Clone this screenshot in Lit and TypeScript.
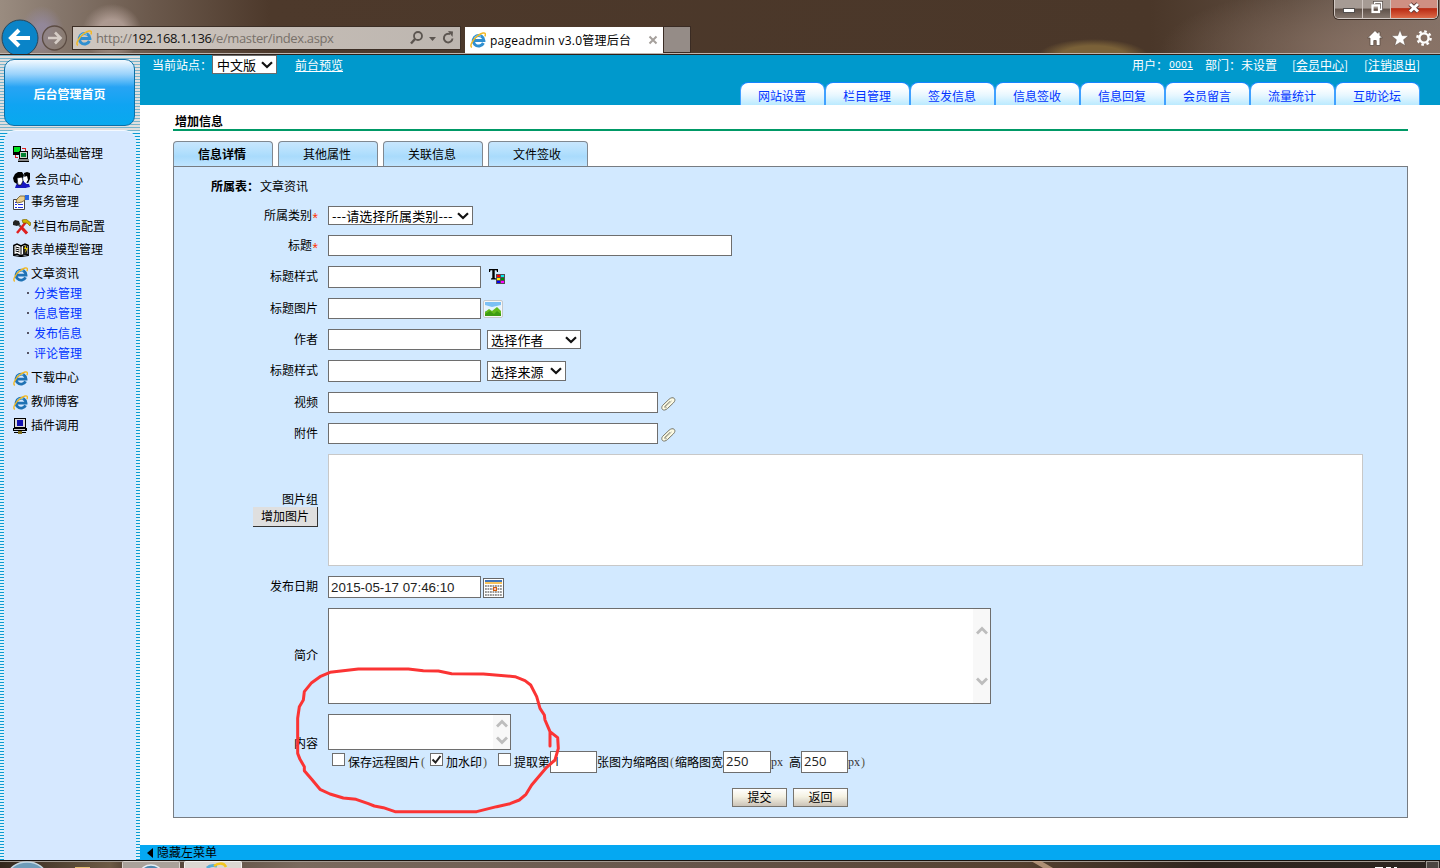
import { LitElement, html, css, svg } from 'lit';
import type { TemplateResult } from 'lit';
import { customElement } from 'lit/decorators.js';
import { classMap } from 'lit/directives/class-map.js';

interface MenuItem {
  label: string;
  icon?: TemplateResult;
  pitch: number;
  sub?: boolean;
  indent?: number;
}

const ieIcon = (size: number, color = '#2f8fd0') => html`
  <svg width=${size} height=${size} viewBox="0 0 16 16">
    <path d="M13.400 11A5.300 5.300 0 1 1 13.900 8.600H4.600" fill="none" stroke=${color} stroke-width="3" />
    <path d="M4.200 6.200A4.600 4.600 0 0 1 11 4.400" fill="none" stroke="#7cc8f0" stroke-width="1.2" />
    <path d="M2 15.200C-1 14.600 2.600 7.600 7.400 4 11.400 .9 15.400 -.2 15.400 2.400c0 .8-.2 1.400-.6 2" fill="none" stroke="#f2b824" stroke-width="1.500" />
  </svg>
`;

const chevron = html`
  <svg class="chevron" width="12" height="8" viewBox="0 0 12 8">
    <path d="M1 1.200 6 6 11 1.200" fill="none" stroke="#111" stroke-width="2.200" />
  </svg>
`;

const networkIcon = html`
  <svg width="16" height="16" viewBox="0 0 16 16" shape-rendering="crispEdges">
    <rect x="0" y="0" width="8" height="8" fill="#000" />
    <rect x="1" y="1" width="6" height="5" fill="#00e020" />
    <path d="M9 2.500h3.500V5M2.500 9v2.500H5" fill="none" stroke="#e02020" />
    <rect x="6" y="5" width="9" height="8" fill="#000" />
    <rect x="7" y="6" width="7" height="6" fill="#c8d0c8" />
    <rect x="8" y="7" width="5" height="4" fill="#008030" />
    <rect x="5" y="13" width="11" height="2" fill="#888" />
    <path d="M0 8.500h6M5 15.500h11" stroke="#000" />
  </svg>
`;

const membersIcon = html`
  <svg width="18" height="16" viewBox="0 0 18 16">
    <path d="M6 9h5l3 4-1 3H2l1-3z" fill="#1818c0" />
    <path d="M2 2l3-2h4l2 3-1 3-5 1-1 5-3-2-1-4z" fill="#000" />
    <path d="M4 6l5-1 1 4-2 4H5z" fill="#fff" stroke="#000" stroke-width=".7" />
    <path d="M11 1l3-1 3 1v6l-2 4-3-1z" fill="#000" />
    <path d="M11 5l3-1 1 4-2 3-2-1z" fill="#fff" />
    <path d="M11 12l5 0 1 3-5 1z" fill="#1818c0" />
  </svg>
`;

const tasksIcon = html`
  <svg width="16" height="15" viewBox="0 0 16 15">
    <path d="M.5 4.500h11v10H.5z" fill="#fff" stroke="#444" />
    <path d="M2 7.500h2M2 9.500h2M2 12.500h2M5 9.500h5M5 12.500h5" stroke="#2030e0" />
    <path d="M4 4l3-3h5v4l-3 2-5 1-1-2z" fill="#e8cf90" stroke="#685020" stroke-width=".8" />
    <path d="M12 0h4v5h-4z" fill="#2a6ae0" />
  </svg>
`;

const toolsIcon = html`
  <svg width="18" height="16" viewBox="0 0 18 16">
    <path d="M4 4l10 10" stroke="#555" stroke-width="2" />
    <path d="M9 9l5 5.500" stroke="#e02020" stroke-width="3" />
    <path d="M13 3L4 14" stroke="#e02020" stroke-width="2.400" />
    <path d="M0 3l2-2 4 1 1 3-3 2-4-1z" fill="#222" />
    <path d="M9 1l4-1 5 4-1 3-3-3-4 0z" fill="#d0b000" stroke="#6a5a00" stroke-width=".6" />
  </svg>
`;

const bookIcon = html`
  <svg width="16" height="14" viewBox="0 0 16 14">
    <path d="M.8 2.500L4 1l4 2 4-2 3.200 1.500V12L12 11l-4 2-4-2-3.200 1z" fill="#fff" stroke="#000" stroke-width="1.400" />
    <path d="M8 3v10M2.500 4l4 1M2.500 6l4 1M2.500 8l4 1M.5 12.500L7 13.500h2l6.500-1" fill="none" stroke="#000" />
    <path d="M10 3l4-1v9l-4 1z" fill="#222" />
    <path d="M13 2l-2 4h2l-1 4 3-5h-2z" fill="#f0d000" />
  </svg>
`;

const pluginIcon = html`
  <svg width="14" height="16" viewBox="0 0 14 16" shape-rendering="crispEdges">
    <rect x="1" y="0" width="12" height="10" fill="#000" />
    <rect x="2" y="1" width="10" height="8" fill="#d8d8d8" />
    <rect x="4" y="2" width="6" height="6" fill="#1010b0" />
    <rect x="0" y="10" width="14" height="3" fill="#000" />
    <rect x="1" y="11" width="11" height="1" fill="#ccc" />
    <path d="M1 14.500h12" stroke="#000" />
    <rect x="5" y="13" width="4" height="3" fill="#807020" />
  </svg>
`;

const clipIcon = html`
  <svg width="15" height="14" viewBox="0 0 15 14">
    <path d="M1.500 8.500L8 2.300c2-1.800 4-2 5.200-1 1.200 1.200.8 3-.8 4.600L6.500 11.500c-1.800 1.700-3.800 2-5 1-1-1-.9-2.700 0-4z" fill="#fdfbe4" stroke="#77776a" stroke-width="1" />
    <path d="M4 10l6.500-6M5.800 10.200c-1.600 1.200-2.800.4-2-1L9 4.200" fill="none" stroke="#99998a" stroke-width=".9" />
  </svg>
`;

@customElement('browser-chrome')
export class BrowserChrome extends LitElement {
  static override styles = css`
    :host {
      display: block;
      height: 55px;
      box-sizing: border-box;
      overflow: hidden;
      border-bottom: 1px solid #2e211a;
      font-family: 'Open Sans', 'Noto Sans CJK SC', sans-serif;
      background:
        radial-gradient(ellipse 55px 17px at 1093px 56px, #7a6138 0 60%, transparent),
        radial-gradient(ellipse 22px 26px at 42px 32px, rgba(150, 140, 170, 0.7) 0 30%, transparent),
        radial-gradient(ellipse 30px 28px at 112px 32px, rgba(190, 170, 162, 0.75) 0 45%, transparent),
        radial-gradient(ellipse 240px 70px at 1400px 50px, #8a7366 0%, transparent),
        linear-gradient(90deg, #9a8c80 0, #85766b 60px, #6b594c 150px, #4d392b 270px, #4a3729 1150px, #5e4c3f 1290px, #7e7169 1440px);
    }
    .bar {
      display: flex;
      height: 54px;
      box-sizing: border-box;
      border-bottom: 1px solid #bfb5ae;
    }
    .nav {
      display: flex;
      width: 72px;
      flex: none;
      padding: 18px 0 0 1px;
      box-sizing: border-box;
    }
    .address {
      display: flex;
      align-items: center;
      width: 389px;
      height: 24px;
      margin-top: 26px;
      padding: 0 5px 0 3px;
      box-sizing: border-box;
      border: 1px solid #3c2e25;
      background: linear-gradient(90deg, #cfc7c0, #c3bbb4 60%, #bdb6b0);
      flex: none;
    }
    .url {
      flex: 1;
      margin-left: 4px;
      padding-top: 1px;
      font-size: 13px;
      line-height: 21px;
      color: #777069;
      white-space: nowrap;
      letter-spacing: -0.36px;
    }
    .host {
      color: #111;
    }
    .tab {
      display: flex;
      align-items: center;
      width: 198px;
      height: 26px;
      margin: 27px 0 0 4px;
      padding: 0 5px;
      box-sizing: border-box;
      background: #fff;
      flex: none;
    }
    .tab-title {
      flex: 1;
      margin-left: 4px;
      padding-top: 2px;
      font-size: 12px;
      line-height: 24px;
      color: #000;
      white-space: nowrap;
      letter-spacing: 0.25px;
    }
    .new-tab {
      width: 28px;
      height: 27px;
      margin-top: 26px;
      box-sizing: border-box;
      border: 1px solid #3a2b23;
      background: #958c87;
    }
    .right {
      flex: 1;
      display: flex;
      flex-direction: column;
      align-items: flex-end;
    }
    .controls {
      display: flex;
      width: 104px;
      height: 19px;
      margin-right: 2px;
      box-sizing: border-box;
      border: 1px solid #d2c9c4;
      border-top: 0;
      border-radius: 0 0 5px 5px;
      overflow: hidden;
      box-shadow: 0 0 0 1px #3a2c24;
    }
    .control {
      display: flex;
      justify-content: center;
      width: 28px;
      background: linear-gradient(#a69b94 45%, #5f5149 50%, #85776e);
      border-right: 1px solid #cfc5c0;
      box-sizing: border-box;
    }
    .close {
      flex: 1;
      border-right: 0;
      background: linear-gradient(#cf8f82 0 42%, #b92a12 48%, #dc6a48);
    }
    .tools {
      display: flex;
      gap: 6.5px;
      margin: 10px 7px 0 0;
    }
  `;

  override render() {
    return html`
      <div class="bar">
        <div class="nav">
          <svg width="38" height="38" viewBox="0 0 38 38">
            <circle cx="19" cy="20" r="18" fill="#0a84c8" stroke="#2b4658" />
            <path d="M29 20H11M18 12l-8 8 8 8" fill="none" stroke="#fff" stroke-width="4" />
          </svg>
          <svg width="28" height="38" viewBox="0 0 28 38">
            <circle cx="15.500" cy="20" r="12" fill="#8d8078" fill-opacity=".6" stroke="#5c4c43" stroke-width="1.300" />
            <path d="M9 20h12M16 14.500l5.500 5.500-5.500 5.500" fill="none" stroke="#d5ccc6" stroke-width="2.600" />
          </svg>
        </div>
        <div class="address">
          ${ieIcon(16)}
          <div class="url">http://<span class="host">192.168.1.136</span>/e/master/index.aspx</div>
          <svg width="46" height="16" viewBox="0 0 46 16">
            <circle cx="9" cy="6" r="4" fill="none" stroke="#5c5550" stroke-width="1.800" />
            <path d="M6 9l-4 4.500" stroke="#5c5550" stroke-width="2.400" />
            <path d="M20 7h7l-3.500 4z" fill="#5c5550" />
            <path d="M43.500 8.500a4.300 4.300 0 1 1-2.500-4.300" fill="none" stroke="#5c5550" stroke-width="1.900" />
            <path d="M39 1l5 .5-.5 5.500z" fill="#5c5550" />
          </svg>
        </div>
        <div class="tab">
          ${ieIcon(16)}
          <div class="tab-title">pageadmin v3.0管理后台</div>
          <svg width="10" height="10" viewBox="0 0 10 10">
            <path d="M1.500 1.500l7 7M8.500 1.500l-7 7" stroke="#a5a09c" stroke-width="2" />
          </svg>
        </div>
        <div class="new-tab"></div>
        <div class="right">
          <div class="controls">
            <div class="control">
              <svg width="14" height="18"><rect x="1.500" y="8.500" width="11" height="4" fill="#fff" stroke="#53504f" /></svg>
            </div>
            <div class="control">
              <svg width="14" height="18">
                <path d="M4.500 4V2.500h7v7H10" fill="none" stroke="#5a504b" stroke-width="3" />
                <path d="M4.500 4V2.500h7v7H10" fill="none" stroke="#fff" stroke-width="1.400" />
                <rect x="2.500" y="5.500" width="6.500" height="6.500" fill="none" stroke="#fff" stroke-width="2.200" />
              </svg>
            </div>
            <div class="control close">
              <svg width="16" height="18">
                <path d="M4 4l8 7.500M12 4l-8 7.500" stroke="#5d3a36" stroke-width="4.600" />
                <path d="M4 4l8 7.500M12 4l-8 7.500" stroke="#fff" stroke-width="3" />
              </svg>
            </div>
          </div>
          <div class="tools">
            <svg width="18" height="18" viewBox="0 0 18 18">
              <path d="M9 1.500L1.500 9H4v7.500h3.800v-5h2.400v5H14V9h2.500L14 6.500V3h-2.200v1.300z" fill="#fff" stroke="#5a4b42" stroke-width=".8" />
            </svg>
            <svg width="18" height="18" viewBox="0 0 18 18">
              <path d="M9 .8l2.200 5.800 6.300.2-4.900 3.900 1.700 6.100L9 13.400l-5.300 3.400 1.700-6.100L.5 6.800l6.300-.2z" fill="#fff" stroke="#5a4b42" stroke-width=".5" />
            </svg>
            <svg width="18" height="18" viewBox="0 0 18 18">
              <circle cx="9" cy="9" r="6.600" fill="none" stroke="#fff" stroke-width="2.400" stroke-dasharray="2.600 2.580" />
              <circle cx="9" cy="9" r="4.600" fill="none" stroke="#fff" stroke-width="2.400" />
            </svg>
          </div>
        </div>
      </div>
    `;
  }
}

@customElement('side-menu')
export class SideMenu extends LitElement {
  static override styles = css`
    :host {
      display: flex;
      flex-direction: column;
      width: 140px;
      flex: none;
      box-sizing: border-box;
      padding: 4px 4px 0;
      gap: 4px;
      font: 12px/16px 'Noto Sans CJK SC', sans-serif;
      background:
        linear-gradient(90deg, rgba(225, 205, 195, 0.5), rgba(225, 205, 195, 0.5)) 0 0 / 100% 76px no-repeat,
        repeating-linear-gradient(#0b9bd4 0 1px, #e0f1fa 1px 3px);
    }
    .home {
      display: flex;
      align-items: center;
      justify-content: center;
      width: 131px;
      height: 67px;
      box-sizing: border-box;
      padding-top: 2px;
      border: 1px solid #0c6fa6;
      border-radius: 10px;
      background: linear-gradient(#f2f9ff 0, #9bd3fb 14px, #27a4f4 27px, #0fa4f2 45px, #08a9ee);
      color: #fff;
      font-weight: bold;
    }
    .menu {
      flex: 1;
      padding: 14px 0 0 9px;
      border-radius: 12px 12px 0 0;
      border-top: 1px solid #f4f9ff;
      background: #d6e8ff;
    }
    .item {
      display: flex;
      align-items: flex-start;
      color: #000;
    }
    .icon {
      display: flex;
      align-items: center;
      width: 18px;
      height: 18px;
    }
    .sub {
      color: #0033ff;
    }
    .sub .icon {
      justify-content: flex-end;
      width: 16px;
      height: 16px;
    }
    .dot {
      width: 2px;
      height: 2px;
      background: #556;
    }
  `;

  private _items: Array<MenuItem> = [
    { label: '网站基础管理', icon: networkIcon, pitch: 26 },
    { label: '会员中心', icon: membersIcon, pitch: 22, indent: 4 },
    { label: '事务管理', icon: tasksIcon, pitch: 25 },
    { label: '栏目布局配置', icon: toolsIcon, pitch: 23, indent: 2 },
    { label: '表单模型管理', icon: bookIcon, pitch: 24 },
    { label: '文章资讯', icon: ieIcon(15, '#1f72b4'), pitch: 20 },
    { label: '分类管理', pitch: 20, sub: true, indent: 5 },
    { label: '信息管理', pitch: 20, sub: true, indent: 5 },
    { label: '发布信息', pitch: 20, sub: true, indent: 5 },
    { label: '评论管理', pitch: 24, sub: true, indent: 5 },
    { label: '下载中心', icon: ieIcon(15, '#1f72b4'), pitch: 24 },
    { label: '教师博客', icon: ieIcon(15, '#1f72b4'), pitch: 24 },
    { label: '插件调用', icon: pluginIcon, pitch: 24 },
  ];

  override render() {
    return html`
      <div class="home">后台管理首页</div>
      <div class="menu">
        ${this._items.map(
          (item) => html`
            <div class=${classMap({ item: true, sub: !!item.sub })} style="height: ${item.pitch}px">
              <span class="icon">${item.icon ?? html`<span class="dot"></span>`}</span>
              <span style="margin-left: ${item.indent ?? 0}px">${item.label}</span>
            </div>
          `
        )}
      </div>
    `;
  }
}

@customElement('site-header')
export class SiteHeader extends LitElement {
  static override styles = css`
    :host {
      display: flex;
      justify-content: space-between;
      height: 50px;
      background: #0099cc;
      color: #fff;
      font: 12px/19px 'Noto Sans CJK SC', sans-serif;
    }
    .site {
      display: flex;
      padding-left: 12px;
    }
    .select {
      display: flex;
      align-items: center;
      justify-content: space-between;
      width: 65px;
      height: 19px;
      box-sizing: border-box;
      padding: 0 3px 0 4px;
      border: 1px solid #6b6b6b;
      background: #fff;
      color: #000;
      font-size: 13px;
      line-height: 16px;
    }
    .preview {
      margin-left: 18px;
      text-decoration: underline;
    }
    .account {
      display: flex;
      flex-direction: column;
      align-items: flex-end;
      justify-content: space-between;
      padding-right: 20px;
    }
    .user {
      display: flex;
      margin-right: -2px;
      white-space: nowrap;
    }
    .link {
      text-decoration: underline;
    }
    .code {
      width: 24px;
      margin-left: 1px;
      font-family: 'DejaVu Sans', sans-serif;
      font-size: 9.5px;
      line-height: 20px;
      text-decoration: underline;
    }
    .bracket {
      width: 6px;
    }
    .right-side {
      text-align: right;
    }
    .gap {
      margin-left: 12px;
    }
    .wide {
      margin-left: 13px;
    }
    .tabs {
      display: flex;
    }
    .tab {
      width: 85px;
      height: 23px;
      box-sizing: border-box;
      padding-right: 1px;
      border: 1px solid #3fa0ff;
      border-top-color: #1585ff;
      border-bottom: 0;
      border-radius: 8px 8px 0 0;
      background: linear-gradient(#fff 20%, #e8f7ff 55%, #baeaff);
      color: #0033ff;
      line-height: 26px;
      text-align: center;
    }
  `;

  private _tabs = ['网站设置', '栏目管理', '签发信息', '信息签收', '信息回复', '会员留言', '流量统计', '互助论坛'];

  override render() {
    return html`
      <div class="site">
        <span>当前站点：</span>
        <span class="select">中文版 ${chevron}</span>
        <span class="preview">前台预览</span>
      </div>
      <div class="account">
        <div class="user">
          <span>用户：</span><span class="code">0001</span>
          <span class="gap">部门：未设置</span>
          <span class="bracket wide right-side">[</span><span class="link">会员中心</span><span class="bracket">]</span>
          <span class="bracket gap right-side">[</span><span class="link">注销退出</span><span class="bracket">]</span>
        </div>
        <div class="tabs">${this._tabs.map((tab) => html`<div class="tab">${tab}</div>`)}</div>
      </div>
    `;
  }
}

@customElement('info-form')
export class InfoForm extends LitElement {
  static override styles = css`
    :host {
      display: block;
      flex: 1;
      padding: 8px 32px 0 33px;
      background: #fff;
      color: #000;
      font: 12px/16px 'Noto Sans CJK SC', sans-serif;
    }
    .title {
      height: 16px;
      padding-left: 2px;
      border-bottom: 2px solid #009966;
      font-weight: bold;
    }
    .tabs {
      display: flex;
      gap: 5px;
      margin-top: 10px;
    }
    .tab {
      width: 100px;
      height: 25px;
      box-sizing: border-box;
      padding-right: 2px;
      border: 1px solid #808890;
      border-bottom: 0;
      border-radius: 4px 4px 0 0;
      background: linear-gradient(#c8e6fd, #b4e0fd 40%, #a9dbfc 60%, #bfe4ff);
      line-height: 24px;
      text-align: center;
    }
    .active {
      font-weight: bold;
    }
    .panel {
      height: 652px;
      box-sizing: border-box;
      padding: 11px 0 0;
      border: 1px solid #777c82;
      background: #d2e9ff;
    }
    .table {
      display: flex;
      gap: 1px;
      padding-left: 37px;
      height: 28px;
    }
    .strong {
      font-weight: bold;
    }
    .rows {
      display: flex;
      flex-direction: column;
      gap: 10px;
    }
    .row {
      display: flex;
      align-items: center;
    }
    .label {
      width: 144px;
      margin-right: 10px;
      padding-bottom: 2px;
      flex: none;
      text-align: right;
    }
    .star {
      display: inline-block;
      width: 6px;
      color: #ff3300;
      font: 14px/10px 'Liberation Sans', sans-serif;
      vertical-align: -3px;
    }
    .field {
      box-sizing: border-box;
      height: 21px;
      margin: 0;
      padding: 0 2px;
      border: 1px solid #6e6e6e;
      border-radius: 0;
      outline: 0;
      background: #fff;
      color: #222;
      font: 13.3px/19px 'Liberation Sans', sans-serif;
    }
    .tall {
      height: 22px;
    }
    .w404 {
      width: 404px;
    }
    .w153 {
      width: 153px;
    }
    .w330 {
      width: 330px;
    }
    .num {
      width: 47px;
      height: 22px;
      padding-bottom: 2px;
      font-family: 'Open Sans', sans-serif;
      font-size: 13px;
      flex: none;
    }
    .num.wider {
      width: 48px;
    }
    .select {
      display: flex;
      align-items: center;
      justify-content: space-between;
      box-sizing: border-box;
      height: 19px;
      padding: 0 3px 0 3px;
      border: 1px solid #6e6e6e;
      background: #fff;
      font-size: 13px;
      line-height: 15px;
      letter-spacing: 0.2px;
      white-space: nowrap;
    }
    .category {
      width: 145px;
    }
    .author {
      width: 94px;
      margin-left: 6px;
    }
    .source {
      width: 79px;
      height: 20px;
      margin-left: 6px;
    }
    .after {
      margin-left: 2px;
      display: flex;
    }
    .calendar {
      margin: 1px 0 -1px 2px;
      display: flex;
    }
    .after-wide {
      margin-left: 7px;
      display: flex;
    }
    .clip {
      margin: 3px 0 0 3px;
      display: flex;
    }
    .group {
      display: flex;
      flex-direction: column;
      align-items: flex-end;
      padding: 0 0 3px;
    }
    .add {
      width: 65px;
      height: 20px;
      box-sizing: border-box;
      border-right: 1px solid #333;
      border-bottom: 1px solid #333;
      background: #dfdfdf;
      line-height: 18px;
      text-align: center;
    }
    .pictures {
      width: 1035px;
      height: 112px;
      box-sizing: border-box;
      border: 1px solid #c8c8c8;
      background: #fff;
    }
    .area {
      display: flex;
      justify-content: flex-end;
      box-sizing: border-box;
      border: 1px solid #6e6e6e;
      background: #fff;
    }
    .intro {
      width: 663px;
      height: 96px;
    }
    .content {
      width: 183px;
      height: 36px;
    }
    .scroll {
      display: flex;
      flex-direction: column;
      align-items: center;
      justify-content: space-between;
      width: 17px;
      box-sizing: border-box;
      padding: 4px 0;
      background: #f8f8f8;
    }
    .intro .scroll {
      padding: 17px 0;
    }
    .options {
      display: flex;
      align-items: center;
      height: 22px;
      margin-top: 1px;
      padding-left: 4px;
      white-space: nowrap;
    }
    .check {
      display: flex;
      width: 13px;
      height: 13px;
      margin: 0 3px 5px 0;
      box-sizing: border-box;
      border: 1px solid #6e6e6e;
      background: #fff;
    }
    .latin {
      font-family: 'Liberation Serif', serif;
      color: #333;
    }
    .paren {
      width: 6px;
      text-align: center;
      font-family: 'Liberation Serif', serif;
      color: #554;
    }
    .next {
      margin-left: 10px;
    }
    .watermark {
      margin-left: 4px;
    }
    .buttons {
      display: flex;
      gap: 6px;
      padding: 15px 0 0 558px;
    }
    .button {
      width: 55px;
      height: 19px;
      box-sizing: border-box;
      border: 1px solid #77746e;
      background: linear-gradient(#fff, #f4f1e2 45%, #cbc3b8);
      line-height: 15px;
      text-align: center;
    }
  `;

  private _tabs = ['信息详情', '其他属性', '关联信息', '文件签收'];

  private _scroll() {
    return html`
      <div class="scroll">
        <svg width="12" height="9" viewBox="0 0 12 9"><path d="M1 7.500L6 2.500l5 5" fill="none" stroke="#bdbdbd" stroke-width="2.800" /></svg>
        <svg width="12" height="9" viewBox="0 0 12 9"><path d="M1 1.500l5 5 5-5" fill="none" stroke="#bdbdbd" stroke-width="2.800" /></svg>
      </div>
    `;
  }

  private _styleIcon() {
    const colors = ['#f00', '#0ee', '#fe0', '#080', '#00e', '#f0f'];
    return html`
      <svg width="17" height="16" viewBox="0 0 17 16">
        <path d="M1 0h9v3H9L8.500 1.200H6.700v7.800l1.300.5v1H3v-1l1.300-.5V1.200H2.500L2 3H1z" fill="#000" />
        <rect x="8" y="5" width="9" height="10" fill="#554a55" />
        ${colors.map((color, i) => svg`<rect x=${9 + (i % 2) * 4} y=${6 + Math.floor(i / 2) * 3} width="3" height="2" fill=${color} />`)}
      </svg>
    `;
  }

  private _pictureIcon() {
    return html`
      <svg width="20" height="18" viewBox="0 0 20 18">
        <rect x=".5" y=".5" width="19" height="17" rx="1.500" fill="#f6f6f6" stroke="#c4c8cc" />
        <rect x="2" y="2" width="16" height="14" fill="#7cc0f5" />
        <path d="M2 5l7 2 9-2v6H2z" fill="#e4f4ff" />
        <path d="M2 12l4-3 3 2 5-4 4 4v5H2z" fill="#62bb1c" />
        <path d="M2 14l5-3 4 3 3-3 4 3v2H2z" fill="#3d9c12" />
      </svg>
    `;
  }

  private _calendarIcon() {
    const cells = Array.from({ length: 28 }, (_, i) => i);
    return html`
      <svg width="21" height="20" viewBox="0 0 21 20">
        <rect x=".5" y=".5" width="20" height="19" fill="#fff" stroke="#666" />
        <rect x="2" y="2" width="17" height="2" fill="#3f73b8" />
        <rect x="2" y="4" width="17" height="2" fill="#f8c45c" />
        ${cells.map((i) => svg`<rect x=${2 + (i % 7) * 2.5} y=${7 + Math.floor(i / 7) * 3} width="1.800" height="2" fill="#999" />`)}
        <rect x="10.500" y="9.500" width="3" height="3" fill="#fbb" stroke="#d2600c" />
      </svg>
    `;
  }

  override render() {
    return html`
      <div class="title">增加信息</div>
      <div class="tabs">
        ${this._tabs.map((tab, i) => html`<div class=${classMap({ tab: true, active: i === 0 })}>${tab}</div>`)}
      </div>
      <div class="panel">
        <div class="table"><span class="strong">所属表：</span><span>文章资讯</span></div>
        <div class="rows">
          <div class="row">
            <div class="label">所属类别<span class="star">*</span></div>
            <div class="select category">---请选择所属类别--- ${chevron}</div>
          </div>
          <div class="row">
            <div class="label">标题<span class="star">*</span></div>
            <input class="field w404" />
          </div>
          <div class="row">
            <div class="label">标题样式</div>
            <input class="field tall w153" />
            <span class="after-wide">${this._styleIcon()}</span>
          </div>
          <div class="row">
            <div class="label">标题图片</div>
            <input class="field w153" />
            <span class="after">${this._pictureIcon()}</span>
          </div>
          <div class="row">
            <div class="label">作者</div>
            <input class="field w153" />
            <div class="select author">选择作者 ${chevron}</div>
          </div>
          <div class="row">
            <div class="label">标题样式</div>
            <input class="field tall w153" />
            <div class="select source">选择来源 ${chevron}</div>
          </div>
          <div class="row">
            <div class="label">视频</div>
            <input class="field w330" />
            <span class="clip">${clipIcon}</span>
          </div>
          <div class="row">
            <div class="label">附件</div>
            <input class="field w330" />
            <span class="clip">${clipIcon}</span>
          </div>
          <div class="row">
            <div class="label group">
              <span>图片组</span>
              <span class="add">增加图片</span>
            </div>
            <div class="pictures"></div>
          </div>
          <div class="row">
            <div class="label">发布日期</div>
            <input class="field tall w153" value="2015-05-17 07:46:10" />
            <span class="calendar">${this._calendarIcon()}</span>
          </div>
          <div class="row">
            <div class="label">简介</div>
            <div class="area intro">${this._scroll()}</div>
          </div>
          <div class="row">
            <div class="label">内容</div>
            <div>
              <div class="area content">${this._scroll()}</div>
              <div class="options">
                <span class="check"></span>保存远程图片<span class="paren">(</span>
                <span class="check watermark">
                  <svg width="11" height="11" viewBox="0 0 11 11"><path d="M1.500 5.500l3 3L9.500 2" fill="none" stroke="#222" stroke-width="2" /></svg>
                </span>加水印<span class="paren">)</span>
                <span class="check next"></span>提取第<input class="field num" value="1" />张图为缩略图<span class="paren">(</span>缩略图宽<input
                  class="field num wider"
                  value="250"
                /><span class="latin">px&nbsp;&nbsp;</span>高<input class="field num" value="250" /><span class="latin">px</span><span class="paren">)</span>
              </div>
            </div>
          </div>
        </div>
        <div class="buttons">
          <div class="button">提交</div>
          <div class="button">返回</div>
        </div>
      </div>
    `;
  }
}

@customElement('task-bar')
export class TaskBar extends LitElement {
  static override styles = css`
    :host {
      display: block;
      height: 8px;
      box-sizing: border-box;
      border-top: 1px solid #17110d;
      overflow: hidden;
      background: linear-gradient(90deg, #33261c, #6d5a45 110px, #4a3a2e 130px, #7a6a5e 300px, #655449 700px, #54402f 1020px, #30251e 1200px, #2c2420);
    }
    svg {
      display: block;
    }
  `;

  override render() {
    return html`
      <svg width="1440" height="7" viewBox="0 861 1440 7">
        <path d="M0 861.500h1425" stroke="#a39a92" />
        <ellipse cx="27" cy="876" rx="19" ry="14" fill="#6f9cb8" stroke="#c5d8e2" stroke-width="1.500" />
        <rect x="75" y="867" width="15" height="1" fill="#e5bf70" />
        <rect x="122.500" y="861.500" width="57" height="12" rx="1" fill="#a9a19a" stroke="#d8d2cd" />
        <ellipse cx="151" cy="872" rx="10" ry="7" fill="#4d87ad" stroke="#e4eef4" stroke-width="1.500" />
        <rect x="184.500" y="861.500" width="57" height="12" rx="1" fill="#dcd7d2" stroke="#f4f2f0" />
        <path d="M207 868c3-3 6-3 10-2" fill="none" stroke="#56acd8" stroke-width="3" />
        <path d="M214 866c4-3 10-4 12 1" fill="none" stroke="#f3c61e" stroke-width="2.500" />
        <path d="M1031 861h10l12 7h-10z" fill="#c4a386" opacity=".8" />
        <rect x="1426.500" y="861.500" width="12" height="10" fill="#4b4541" stroke="#9f9994" />
        <path d="M1375 867.500h8M1386 867.500h5M1394 867.500h3" stroke="#fff" />
      </svg>
    `;
  }
}

@customElement('app-root')
export class AppRoot extends LitElement {
  static override styles = css`
    :host {
      display: flex;
      flex-direction: column;
      position: relative;
      width: 1440px;
      height: 868px;
      overflow: hidden;
      background: #fff;
    }
    .page {
      display: flex;
      flex: 1;
      min-height: 0;
    }
    .main {
      display: flex;
      flex-direction: column;
      flex: 1;
    }
    .toggle {
      display: flex;
      align-items: center;
      gap: 4px;
      height: 15px;
      padding-left: 7px;
      background: #05a8f2;
      font: 12px/13px 'Noto Sans CJK SC', sans-serif;
    }
    .toggle span {
      padding-bottom: 2px;
    }
    /* hand drawn marker lying over the form */
    .marker {
      position: absolute;
      left: 280px;
      top: 600px;
      pointer-events: none;
    }
  `;

  override render() {
    return html`
      <browser-chrome></browser-chrome>
      <div class="page">
        <side-menu></side-menu>
        <div class="main">
          <site-header></site-header>
          <info-form></info-form>
          <div class="toggle">
            <svg width="6" height="10" viewBox="0 0 6 10"><path d="M6 0v10L0 5z" fill="#000" /></svg>
            <span>隐藏左菜单</span>
          </div>
        </div>
      </div>
      <task-bar></task-bar>
      <svg class="marker" width="320" height="225" viewBox="0 0 960 675">
        <path
          d="M810 438V395L833 413 835 445 825 480 800 502 755 555 738 583 718 600 690 611 650 620 590 635H345L310 623 283 618 265 611 228 598 190 594 150 582 120 568 95 538 73 512V500L60 478 53 460V355L58 320 70 300 73 275 95 248 120 230 150 217 235 207H385L430 212 475 213 515 221 610 222 705 230 735 242 752 255 770 290 780 325 793 345 795 360 810 395"
          fill="none"
          stroke="#fb3434"
          stroke-width="9"
          stroke-linejoin="round"
          stroke-linecap="round"
        />
      </svg>
    `;
  }
}

declare global {
  interface HTMLElementTagNameMap {
    'app-root': AppRoot;
    'browser-chrome': BrowserChrome;
    'side-menu': SideMenu;
    'site-header': SiteHeader;
    'info-form': InfoForm;
    'task-bar': TaskBar;
  }
}
